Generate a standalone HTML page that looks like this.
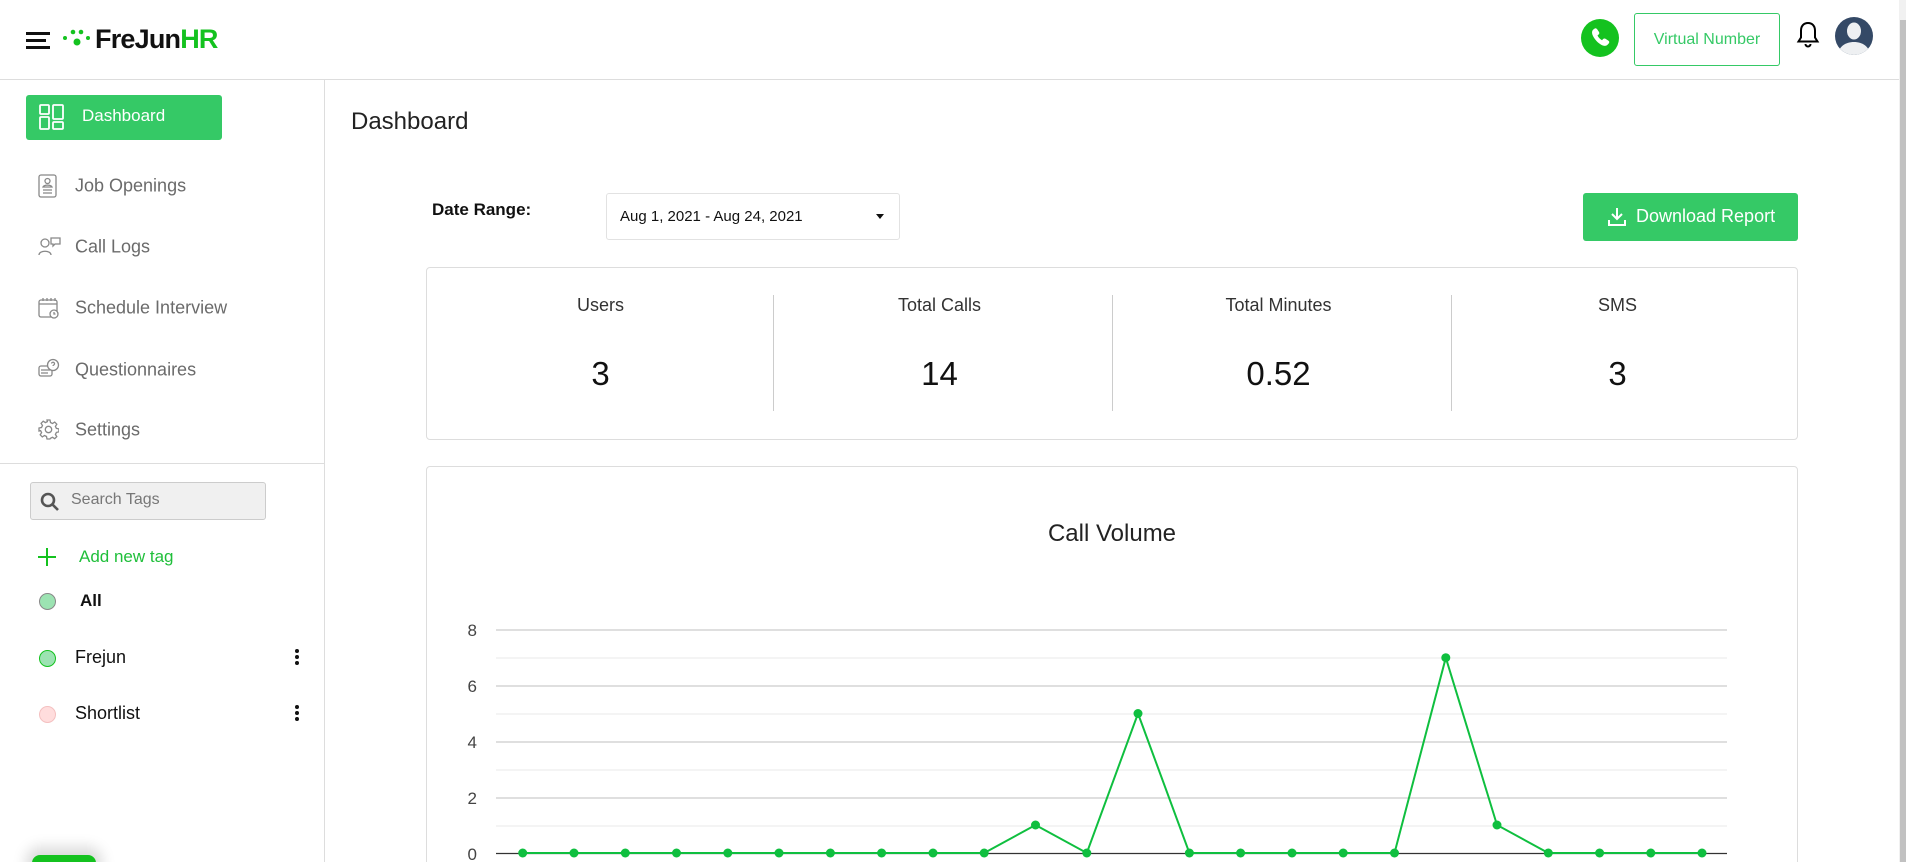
<!DOCTYPE html>
<html style="height:862px;overflow:hidden"><head><meta charset="utf-8"><style>
*{box-sizing:border-box;margin:0;padding:0}
body{width:1906px;height:862px;overflow:hidden;background:#fff;font-family:"Liberation Sans",Arial,sans-serif;color:#222}
#w{position:relative;width:1906px;height:862px;overflow:hidden}
.abs{position:absolute}
.nav{position:absolute;left:75px;font-size:18px;color:#6b6b6b;transform:translateY(-50%)}
.ico{position:absolute;left:38px}
.lbl{position:absolute;font-size:18px;color:#333;text-align:center;width:339px}
.val{position:absolute;font-size:33px;color:#111;text-align:center;width:339px}
.dots{position:absolute;left:295px;width:4px}
.dots i{display:block;width:4px;height:4px;border-radius:50%;background:#111;margin-bottom:2px}
</style></head><body><div id="w">
<!-- header -->
<div class="abs" style="left:0;top:79px;width:1899px;height:1px;background:#ddd"></div>
<div class="abs" style="left:26px;top:32px;width:24px;height:3px;background:#111"></div>
<div class="abs" style="left:26px;top:39px;width:20px;height:3px;background:#111"></div>
<div class="abs" style="left:26px;top:46px;width:24px;height:3px;background:#111"></div>
<svg class="abs" style="left:62px;top:28px" width="30" height="22"><circle cx="3" cy="10" r="2" fill="#14c21f"/><circle cx="11" cy="4" r="2.3" fill="#14c21f"/><circle cx="19" cy="4" r="2.3" fill="#14c21f"/><circle cx="15" cy="14" r="3.5" fill="#14c21f"/><circle cx="26" cy="10" r="2" fill="#14c21f"/></svg>
<div class="abs" style="left:95px;top:24px;font-size:27px;font-weight:bold;letter-spacing:-0.8px;color:#111">FreJun<span style="color:#14c21f">HR</span></div>
<svg class="abs" style="left:1581px;top:19px" width="38" height="38"><circle cx="19" cy="19" r="19" fill="#14c21f"/><path d="M13 10c1-1 2-1 3 0l2 3c.6 1 .3 2-.5 2.6l-1 .8c.8 2 2.5 3.8 4.5 4.8l.9-1c.7-.8 1.7-1 2.6-.4l3 2c1 .7 1 1.8.2 2.7l-1.3 1.4c-1.5 1.5-4 1.3-7-.6-3.3-2.2-6-5.2-7.5-8.5-1.2-2.8-1.1-4.9.2-6.1z" fill="#fff"/></svg>
<div class="abs" style="left:1634px;top:13px;width:146px;height:53px;border:1px solid #35c966;border-radius:3px;color:#35c966;font-size:16px;text-align:center;line-height:51px">Virtual Number</div>
<svg class="abs" style="left:1796px;top:20px" width="24" height="30"><path d="M12 3c-4.5 0-7 3.3-7 7.5v7L2.5 21.5h19L19 17.5v-7C19 6.3 16.5 3 12 3z" fill="none" stroke="#000" stroke-width="2"/><path d="M9.5 24a2.5 2.5 0 005 0" fill="none" stroke="#000" stroke-width="2"/></svg>
<svg class="abs" style="left:1834px;top:16px" width="40" height="40"><circle cx="20" cy="20" r="19" fill="#344966"/><clipPath id="c"><circle cx="20" cy="20" r="19"/></clipPath><g clip-path="url(#c)" fill="#eef0f2"><ellipse cx="20" cy="15" rx="7" ry="8.5"/><path d="M4 40c0-9 7-14 16-14s16 5 16 14z"/></g></svg>
<!-- scrollbar -->
<div class="abs" style="left:1899px;top:0;width:7px;height:862px;background:#f1f1f1"></div>
<div class="abs" style="left:1900px;top:20px;width:6px;height:842px;background:#c1c1c1"></div>
<!-- sidebar -->
<div class="abs" style="left:324px;top:80px;width:1px;height:782px;background:#ddd"></div>
<div class="abs" style="left:0;top:463px;width:324px;height:1px;background:#ddd"></div>
<div class="abs" style="left:26px;top:95px;width:196px;height:45px;background:#35c966;border-radius:3px"></div>
<svg class="abs" style="left:39px;top:104px" width="26" height="26" fill="none" stroke="#fff" stroke-width="1.8"><rect x="1" y="1" width="9" height="9" rx="1"/><rect x="14" y="1" width="10" height="14" rx="1"/><rect x="1" y="13" width="9" height="12" rx="1"/><rect x="14" y="18" width="10" height="7" rx="1"/></svg>
<div class="abs" style="left:82px;top:106px;font-size:17px;color:#fff">Dashboard</div>
<svg class="ico" style="top:173px" width="20" height="26" fill="none" stroke="#888" stroke-width="1.3"><rect x="1" y="2" width="17" height="22" rx="2"/><circle cx="9.5" cy="8" r="2.5"/><path d="M5 14c1-2.5 8-2.5 9 0zM5 17h9M5 20h9"/></svg>
<div class="nav" style="top:186px">Job Openings</div>
<svg class="ico" style="top:236px" width="24" height="20" fill="none" stroke="#888" stroke-width="1.3"><circle cx="7" cy="7" r="4"/><path d="M1 19c0-5 12-5 12 0M13 2h9v6h-5l-2 2v-2h-2z"/></svg>
<div class="nav" style="top:247px">Call Logs</div>
<svg class="ico" style="top:297px" width="22" height="22" fill="none" stroke="#888" stroke-width="1.3"><rect x="1" y="3" width="18" height="17" rx="2"/><path d="M1 7h18M5 1v3M9 1v3M13 1v3M17 1v3"/><circle cx="16" cy="17" r="4" fill="#fff"/><path d="M16 15v2h1.5"/></svg>
<div class="nav" style="top:308px">Schedule Interview</div>
<svg class="ico" style="top:358px" width="22" height="22" fill="none" stroke="#888" stroke-width="1.3"><rect x="1" y="8" width="13" height="10" rx="2"/><path d="M3 12h9M3 15h7"/><circle cx="15" cy="7" r="5.5" fill="#fff"/><path d="M13.5 5.5a1.5 1.5 0 113 .5c0 1-1.5 1-1.5 2M15 9.5v.1"/></svg>
<div class="nav" style="top:370px">Questionnaires</div>
<svg class="ico" style="top:419px" width="21" height="21" fill="none" stroke="#888" stroke-width="1.3"><circle cx="10.5" cy="10.5" r="3.2"/><path d="M9 1h3l.5 2.5 2 1 2.2-1.4 2.1 2.1-1.4 2.2 1 2 2.5.5v3l-2.5.5-1 2 1.4 2.2-2.1 2.1-2.2-1.4-2 1L12 20H9l-.5-2.5-2-1-2.2 1.4-2.1-2.1 1.4-2.2-1-2L1 12V9l2.5-.5 1-2-1.4-2.2 2.1-2.1 2.2 1.4 2-1z"/></svg>
<div class="nav" style="top:430px">Settings</div>
<div class="abs" style="left:30px;top:482px;width:236px;height:38px;background:#f0f0f0;border:1px solid #ccc;border-radius:3px"></div>
<svg class="abs" style="left:40px;top:492px" width="20" height="20" fill="none" stroke="#555" stroke-width="2.6"><circle cx="8" cy="8" r="6"/><path d="M12.5 12.5l5.5 5.5"/></svg>
<div class="abs" style="left:71px;top:491px;font-size:16px;color:#777">Search Tags</div>
<div class="abs" style="left:38px;top:556px;width:18px;height:2px;background:#14c21f"></div>
<div class="abs" style="left:46px;top:548px;width:2px;height:18px;background:#14c21f"></div>
<div class="abs" style="left:79px;top:547px;font-size:17px;color:#1fbf3a">Add new tag</div>
<div class="abs" style="left:39px;top:593px;width:17px;height:17px;border-radius:50%;background:#9ce3b2;border:1px solid #888"></div>
<div class="abs" style="left:80px;top:591px;font-size:17px;font-weight:bold;color:#111">All</div>
<div class="abs" style="left:39px;top:650px;width:17px;height:17px;border-radius:50%;background:#9ce3b2;border:1px solid #14c21f"></div>
<div class="abs" style="left:75px;top:647px;font-size:18px;color:#111">Frejun</div>
<div class="dots" style="top:649px"><i></i><i></i><i></i></div>
<div class="abs" style="left:39px;top:706px;width:17px;height:17px;border-radius:50%;background:#fdd;border:1px solid #f4c0c0"></div>
<div class="abs" style="left:75px;top:703px;font-size:18px;color:#111">Shortlist</div>
<div class="dots" style="top:705px"><i></i><i></i><i></i></div>
<div class="abs" style="left:32px;top:855px;width:64px;height:20px;background:#14c21f;border-radius:8px;box-shadow:0 -2px 14px 6px rgba(0,0,0,.15)"></div>
<!-- main -->
<div class="abs" style="left:351px;top:108px;font-size:24px;color:#222">Dashboard</div>
<div class="abs" style="left:432px;top:200px;font-size:17px;font-weight:bold;color:#111">Date Range:</div>
<div class="abs" style="left:606px;top:193px;width:294px;height:47px;border:1px solid #e2e2e2;border-radius:3px"></div>
<div class="abs" style="left:620px;top:208px;font-size:15px;color:#111">Aug 1, 2021 - Aug 24, 2021</div>
<div class="abs" style="left:876px;top:214px;width:0;height:0;border-left:4px solid transparent;border-right:4px solid transparent;border-top:5px solid #111"></div>
<div class="abs" style="left:1583px;top:193px;width:215px;height:48px;background:#35c966;border-radius:3px"></div>
<svg class="abs" style="left:1608px;top:207px" width="18" height="19" fill="none" stroke="#fff" stroke-width="2"><path d="M9 1v11M4 7l5 5 5-5M1 13v5h16v-5"/></svg>
<div class="abs" style="left:1636px;top:206px;font-size:18px;color:#fff">Download Report</div>
<div class="abs" style="left:426px;top:267px;width:1372px;height:173px;border:1px solid #ddd;border-radius:4px"></div>
<div class="abs" style="left:773px;top:295px;width:1px;height:116px;background:#ccc"></div>
<div class="abs" style="left:1112px;top:295px;width:1px;height:116px;background:#ccc"></div>
<div class="abs" style="left:1451px;top:295px;width:1px;height:116px;background:#ccc"></div>
<div class="lbl" style="left:431px;top:295px">Users</div>
<div class="lbl" style="left:770px;top:295px">Total Calls</div>
<div class="lbl" style="left:1109px;top:295px">Total Minutes</div>
<div class="lbl" style="left:1448px;top:295px">SMS</div>
<div class="val" style="left:431px;top:355px">3</div>
<div class="val" style="left:770px;top:355px">14</div>
<div class="val" style="left:1109px;top:355px">0.52</div>
<div class="val" style="left:1448px;top:355px">3</div>
<div class="abs" style="left:426px;top:466px;width:1372px;height:420px;border:1px solid #ddd;border-radius:4px"></div>
<div class="abs" style="left:426px;top:520px;width:1372px;text-align:center;font-size:24px;color:#222">Call Volume</div>
<svg class="abs" style="left:0;top:0" width="1906" height="862">
<g stroke="#eee" stroke-width="1.3"><path d="M496 658H1727M496 714H1727M496 770H1727M496 826H1727"/></g>
<g stroke="#ccc" stroke-width="1.3"><path d="M496 630H1727M496 686H1727M496 742H1727M496 798H1727"/></g>
<path d="M496 853.5H1727" stroke="#333" stroke-width="1.3"/>
<g font-family="Liberation Sans,Arial,sans-serif" font-size="17" fill="#444" text-anchor="end"><text x="477" y="636">8</text><text x="477" y="692">6</text><text x="477" y="748">4</text><text x="477" y="804">2</text><text x="477" y="860">0</text></g>
<polyline fill="none" stroke="#0fbf3f" stroke-width="2" points="522.7,853 574,853 625.3,853 676.5,853 727.8,853 779,853 830.4,853 881.6,853 933,853 984.2,853 1035.5,825 1086.8,853 1138,713.5 1189.4,853 1240.6,853 1292,853 1343.2,853 1394.5,853 1445.8,657.7 1497,825 1548.3,853 1599.6,853 1650.8,853 1702,853"/>
<g fill="#0fbf3f"><circle cx="522.7" cy="853" r="4.5"/><circle cx="574" cy="853" r="4.5"/><circle cx="625.3" cy="853" r="4.5"/><circle cx="676.5" cy="853" r="4.5"/><circle cx="727.8" cy="853" r="4.5"/><circle cx="779" cy="853" r="4.5"/><circle cx="830.4" cy="853" r="4.5"/><circle cx="881.6" cy="853" r="4.5"/><circle cx="933" cy="853" r="4.5"/><circle cx="984.2" cy="853" r="4.5"/><circle cx="1035.5" cy="825" r="4.5"/><circle cx="1086.8" cy="853" r="4.5"/><circle cx="1138" cy="713.5" r="4.5"/><circle cx="1189.4" cy="853" r="4.5"/><circle cx="1240.6" cy="853" r="4.5"/><circle cx="1292" cy="853" r="4.5"/><circle cx="1343.2" cy="853" r="4.5"/><circle cx="1394.5" cy="853" r="4.5"/><circle cx="1445.8" cy="657.7" r="4.5"/><circle cx="1497" cy="825" r="4.5"/><circle cx="1548.3" cy="853" r="4.5"/><circle cx="1599.6" cy="853" r="4.5"/><circle cx="1650.8" cy="853" r="4.5"/><circle cx="1702" cy="853" r="4.5"/></g>
</svg>
</div></body></html>
